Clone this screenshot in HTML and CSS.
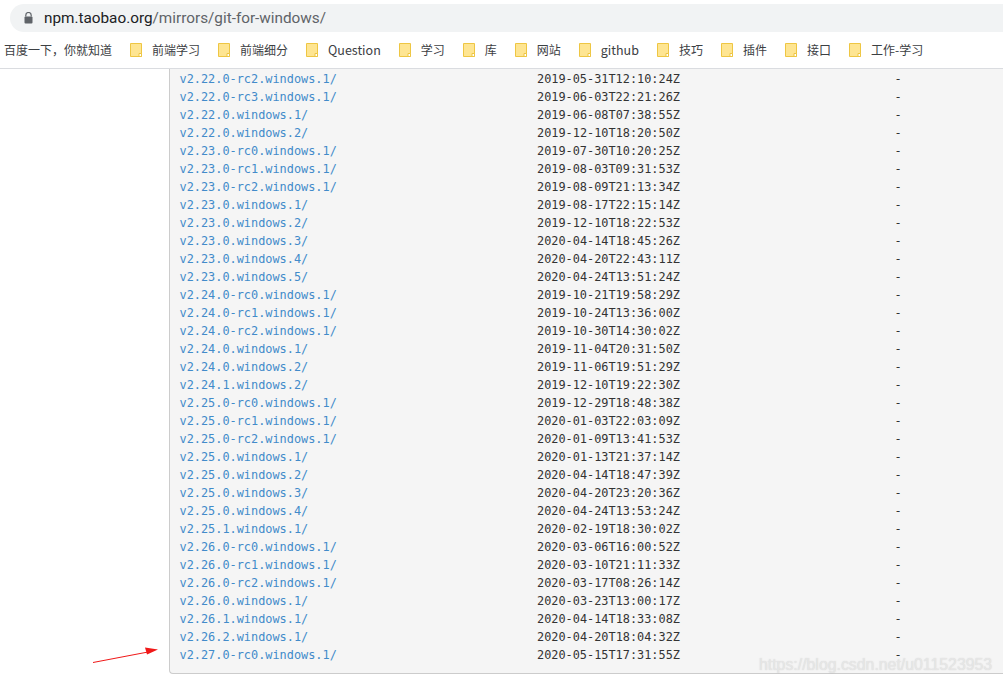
FILE: index.html
```html
<!DOCTYPE html>
<html lang="en">
<head>
    <meta charset="UTF-8">
    <link rel="stylesheet" href="styles.css">
    <title>Mirror index of git-for-windows</title>
</head>
<body>
    <div class="address-row">
        <div class="omnibox">
            <svg class="lock" width="9" height="12" viewBox="0 0 9 12">
                <path d="M1.8 4.5V3.2a2.7 2.7 0 0 1 5.4 0v1.3" fill="none" stroke="#5f6368" stroke-width="1.2"/>
                <rect x="0.5" y="4.5" width="8" height="7" rx="1" fill="#5f6368"/>
            </svg>
            <span class="url"><span class="host">npm.taobao.org</span>/mirrors/git-for-windows/</span>
        </div>
    </div>

    <div class="bookmarks">
        <span class="bookmark">百度一下，你就知道</span>
        <span class="bookmark"><svg class="folder" viewBox="0 0 12 14"><path d="M.5.5h11v13H.5z" fill="#fee592" stroke="#eec643"/><path d="M9 13.5v-3h2.500v3z" fill="#fff" stroke="#eec643"/></svg>前端学习</span>
        <span class="bookmark"><svg class="folder" viewBox="0 0 12 14"><path d="M.5.5h11v13H.5z" fill="#fee592" stroke="#eec643"/><path d="M9 13.5v-3h2.500v3z" fill="#fff" stroke="#eec643"/></svg>前端细分</span>
        <span class="bookmark"><svg class="folder" viewBox="0 0 12 14"><path d="M.5.5h11v13H.5z" fill="#fee592" stroke="#eec643"/><path d="M9 13.5v-3h2.500v3z" fill="#fff" stroke="#eec643"/></svg><span class="latin">Question</span></span>
        <span class="bookmark"><svg class="folder" viewBox="0 0 12 14"><path d="M.5.5h11v13H.5z" fill="#fee592" stroke="#eec643"/><path d="M9 13.5v-3h2.500v3z" fill="#fff" stroke="#eec643"/></svg>学习</span>
        <span class="bookmark"><svg class="folder" viewBox="0 0 12 14"><path d="M.5.5h11v13H.5z" fill="#fee592" stroke="#eec643"/><path d="M9 13.5v-3h2.500v3z" fill="#fff" stroke="#eec643"/></svg>库</span>
        <span class="bookmark"><svg class="folder" viewBox="0 0 12 14"><path d="M.5.5h11v13H.5z" fill="#fee592" stroke="#eec643"/><path d="M9 13.5v-3h2.500v3z" fill="#fff" stroke="#eec643"/></svg>网站</span>
        <span class="bookmark"><svg class="folder" viewBox="0 0 12 14"><path d="M.5.5h11v13H.5z" fill="#fee592" stroke="#eec643"/><path d="M9 13.5v-3h2.500v3z" fill="#fff" stroke="#eec643"/></svg><span class="latin">github</span></span>
        <span class="bookmark"><svg class="folder" viewBox="0 0 12 14"><path d="M.5.5h11v13H.5z" fill="#fee592" stroke="#eec643"/><path d="M9 13.5v-3h2.500v3z" fill="#fff" stroke="#eec643"/></svg>技巧</span>
        <span class="bookmark"><svg class="folder" viewBox="0 0 12 14"><path d="M.5.5h11v13H.5z" fill="#fee592" stroke="#eec643"/><path d="M9 13.5v-3h2.500v3z" fill="#fff" stroke="#eec643"/></svg>插件</span>
        <span class="bookmark"><svg class="folder" viewBox="0 0 12 14"><path d="M.5.5h11v13H.5z" fill="#fee592" stroke="#eec643"/><path d="M9 13.5v-3h2.500v3z" fill="#fff" stroke="#eec643"/></svg>接口</span>
        <span class="bookmark"><svg class="folder" viewBox="0 0 12 14"><path d="M.5.5h11v13H.5z" fill="#fee592" stroke="#eec643"/><path d="M9 13.5v-3h2.500v3z" fill="#fff" stroke="#eec643"/></svg>工作-学习</span>
    </div>

    <div class="page">
<pre class="listing"><a href="#">v2.22.0-rc2.windows.1/</a>                            2019-05-31T12:10:24Z                              -
<a href="#">v2.22.0-rc3.windows.1/</a>                            2019-06-03T22:21:26Z                              -
<a href="#">v2.22.0.windows.1/</a>                                2019-06-08T07:38:55Z                              -
<a href="#">v2.22.0.windows.2/</a>                                2019-12-10T18:20:50Z                              -
<a href="#">v2.23.0-rc0.windows.1/</a>                            2019-07-30T10:20:25Z                              -
<a href="#">v2.23.0-rc1.windows.1/</a>                            2019-08-03T09:31:53Z                              -
<a href="#">v2.23.0-rc2.windows.1/</a>                            2019-08-09T21:13:34Z                              -
<a href="#">v2.23.0.windows.1/</a>                                2019-08-17T22:15:14Z                              -
<a href="#">v2.23.0.windows.2/</a>                                2019-12-10T18:22:53Z                              -
<a href="#">v2.23.0.windows.3/</a>                                2020-04-14T18:45:26Z                              -
<a href="#">v2.23.0.windows.4/</a>                                2020-04-20T22:43:11Z                              -
<a href="#">v2.23.0.windows.5/</a>                                2020-04-24T13:51:24Z                              -
<a href="#">v2.24.0-rc0.windows.1/</a>                            2019-10-21T19:58:29Z                              -
<a href="#">v2.24.0-rc1.windows.1/</a>                            2019-10-24T13:36:00Z                              -
<a href="#">v2.24.0-rc2.windows.1/</a>                            2019-10-30T14:30:02Z                              -
<a href="#">v2.24.0.windows.1/</a>                                2019-11-04T20:31:50Z                              -
<a href="#">v2.24.0.windows.2/</a>                                2019-11-06T19:51:29Z                              -
<a href="#">v2.24.1.windows.2/</a>                                2019-12-10T19:22:30Z                              -
<a href="#">v2.25.0-rc0.windows.1/</a>                            2019-12-29T18:48:38Z                              -
<a href="#">v2.25.0-rc1.windows.1/</a>                            2020-01-03T22:03:09Z                              -
<a href="#">v2.25.0-rc2.windows.1/</a>                            2020-01-09T13:41:53Z                              -
<a href="#">v2.25.0.windows.1/</a>                                2020-01-13T21:37:14Z                              -
<a href="#">v2.25.0.windows.2/</a>                                2020-04-14T18:47:39Z                              -
<a href="#">v2.25.0.windows.3/</a>                                2020-04-20T23:20:36Z                              -
<a href="#">v2.25.0.windows.4/</a>                                2020-04-24T13:53:24Z                              -
<a href="#">v2.25.1.windows.1/</a>                                2020-02-19T18:30:02Z                              -
<a href="#">v2.26.0-rc0.windows.1/</a>                            2020-03-06T16:00:52Z                              -
<a href="#">v2.26.0-rc1.windows.1/</a>                            2020-03-10T21:11:33Z                              -
<a href="#">v2.26.0-rc2.windows.1/</a>                            2020-03-17T08:26:14Z                              -
<a href="#">v2.26.0.windows.1/</a>                                2020-03-23T13:00:17Z                              -
<a href="#">v2.26.1.windows.1/</a>                                2020-04-14T18:33:08Z                              -
<a href="#">v2.26.2.windows.1/</a>                                2020-04-20T18:04:32Z                              -
<a href="#">v2.27.0-rc0.windows.1/</a>                            2020-05-15T17:31:55Z                              -</pre>

        <!-- red arrow drawn over the screenshot -->
        <svg class="arrow" width="70" height="20" viewBox="0 0 70 20">
            <path d="M1 17.500L56 7" stroke="#f01818" stroke-width="1" fill="none"/>
            <path d="M66 4.500L53 2.500L55 9.500z" fill="#f01818"/>
        </svg>
        <div class="watermark">https://blog.csdn.net/u011523953</div>
    </div>
</body>
</html>
```

FILE: styles.css
```css
html, body {
    margin: 0;
    height: 685px;
    overflow: hidden;
    background-color: #fff;
}

body {
    font-family: 'Noto Sans CJK SC', 'Noto Sans', sans-serif;
    display: flex;
    flex-direction: column;
}

.address-row {
    height: 32px;
    padding: 4px 0 0 10px;
    box-sizing: border-box;
}

.omnibox {
    height: 28px;
    display: flex;
    align-items: center;
    padding-left: 14px;
    background-color: #f1f3f4;
    border-radius: 14px 0 0 14px;
}

.lock {
    margin-right: 11px;
}

.url {
    font-family: 'Roboto', sans-serif;
    font-size: 15.300px;
    color: #5f6368;
}

.host {
    color: #202124;
}

.bookmarks {
    height: 37px;
    box-sizing: border-box;
    padding: 0 0 1px 4px;
    display: flex;
    align-items: center;
    gap: 18px;
    border-bottom: 1px solid #dadce0;
    font-size: 12px;
    color: #3c4043;
}

.bookmark {
    display: flex;
    align-items: center;
    white-space: nowrap;
}

.latin {
    font-size: 12.500px;
}

.folder {
    width: 12px;
    height: 14px;
    margin-right: 10px;
}

.page {
    position: relative;
    flex: 1;
}

.listing {
    margin: 0 0 0 169px;
    padding: 1px 0 9px 9.500px;
    background-color: #f5f5f5;
    border: 1px solid #ccc;
    border-width: 0 0 1px 1px;
    border-radius: 0 0 0 4px;
    font-family: 'DejaVu Sans Mono', monospace;
    font-size: 11.880px;
    line-height: 18px;
    color: #333;
}

.listing a {
    color: #428bca;
    text-decoration: none;
}

.arrow {
    position: absolute;
    left: 92px;
    top: 576px;
}

.watermark {
    position: absolute;
    left: 759px;
    top: 587px;
    font-family: 'Liberation Sans', sans-serif;
    font-size: 15.850px;
    color: rgba(235, 235, 235, 0.8);
    text-shadow: 0 0 1px rgba(170, 170, 170, 0.5);
}
```
